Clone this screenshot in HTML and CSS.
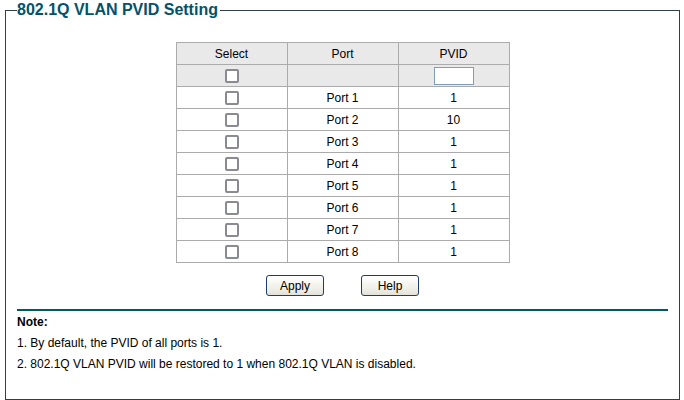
FILE: index.html
```html
<!DOCTYPE html>
<html>
<head>
<meta charset="utf-8">
<link rel="stylesheet" href="styles.css">
</head>
<body>
<fieldset class="panel">
  <legend class="panel-title">802.1Q VLAN PVID Setting</legend>
  <div class="table-wrap">
    <table class="grid">
      <thead>
        <tr class="head"><th>Select</th><th>Port</th><th>PVID</th></tr>
      </thead>
      <tbody>
        <tr class="filter"><td><input type="checkbox" class="chk"></td><td></td><td><input type="text" class="pvid"></td></tr>
        <tr><td><input type="checkbox" class="chk"></td><td>Port 1</td><td>1</td></tr>
        <tr><td><input type="checkbox" class="chk"></td><td>Port 2</td><td>10</td></tr>
        <tr><td><input type="checkbox" class="chk"></td><td>Port 3</td><td>1</td></tr>
        <tr><td><input type="checkbox" class="chk"></td><td>Port 4</td><td>1</td></tr>
        <tr><td><input type="checkbox" class="chk"></td><td>Port 5</td><td>1</td></tr>
        <tr><td><input type="checkbox" class="chk"></td><td>Port 6</td><td>1</td></tr>
        <tr><td><input type="checkbox" class="chk"></td><td>Port 7</td><td>1</td></tr>
        <tr><td><input type="checkbox" class="chk"></td><td>Port 8</td><td>1</td></tr>
      </tbody>
    </table>
  </div>
  <div class="actions">
    <button class="btn">Apply</button>
    <button class="btn">Help</button>
  </div>
  <div class="rule"></div>
  <div class="notes">
    <div class="note-title">Note:</div>
    <div>1. By default, the PVID of all ports is 1.</div>
    <div>2. 802.1Q VLAN PVID will be restored to 1 when 802.1Q VLAN is disabled.</div>
  </div>
</fieldset>
</body>
</html>
```
FILE: styles.css
```css
html, body {
  margin: 0;
  padding: 0;
  background: #fff;
}
body {
  font-family: "Liberation Sans", Arial, sans-serif;
  color: #000;
}
.panel {
  margin: 0 4px 0 5px;
  border: 1px solid #333f47;
  padding: 0 11px 24px 11px;
  min-width: 0;
}
.panel-title {
  padding: 0 2px 0 0;
  font-size: 16px;
  font-weight: bold;
  line-height: 20px;
  color: #00536a;
}
.table-wrap {
  padding-top: 22px;
}
.grid {
  border-collapse: collapse;
  table-layout: fixed;
  width: 334px;
  margin: 0 auto;
  font-size: 12px;
}
.grid th, .grid td {
  border: 1px solid #ababab;
  height: 21px;
  padding: 0;
  text-align: center;
  vertical-align: middle;
  font-weight: normal;
}
.head th, .filter td {
  background: #e9e9e9;
}
.chk {
  appearance: none;
  -webkit-appearance: none;
  display: block;
  width: 14px;
  height: 14px;
  box-sizing: border-box;
  margin: 0 auto;
  border: 2px solid #8a8a92;
  border-radius: 2px;
  background: #fff;
}
.pvid {
  display: block;
  width: 40px;
  height: 18px;
  box-sizing: border-box;
  margin: 0 auto;
  padding: 0;
  border: 1px solid #7f9db9;
  background: #fff;
}
.actions {
  display: flex;
  justify-content: center;
  gap: 37px;
  margin-top: 12px;
}
.btn {
  width: 58px;
  height: 21px;
  box-sizing: border-box;
  padding: 0;
  border: 1px solid #1c3d6e;
  border-radius: 3px;
  background: linear-gradient(#ffffff, #f1f1ea 60%, #e3e2da);
  font-family: "Liberation Sans", Arial, sans-serif;
  font-size: 12px;
  color: #000;
}
.rule {
  height: 2px;
  background: #005a64;
  margin-top: 13px;
}
.notes {
  padding-top: 1px;
  font-size: 12px;
  line-height: 21px;
}
.note-title {
  font-weight: bold;
}
```
